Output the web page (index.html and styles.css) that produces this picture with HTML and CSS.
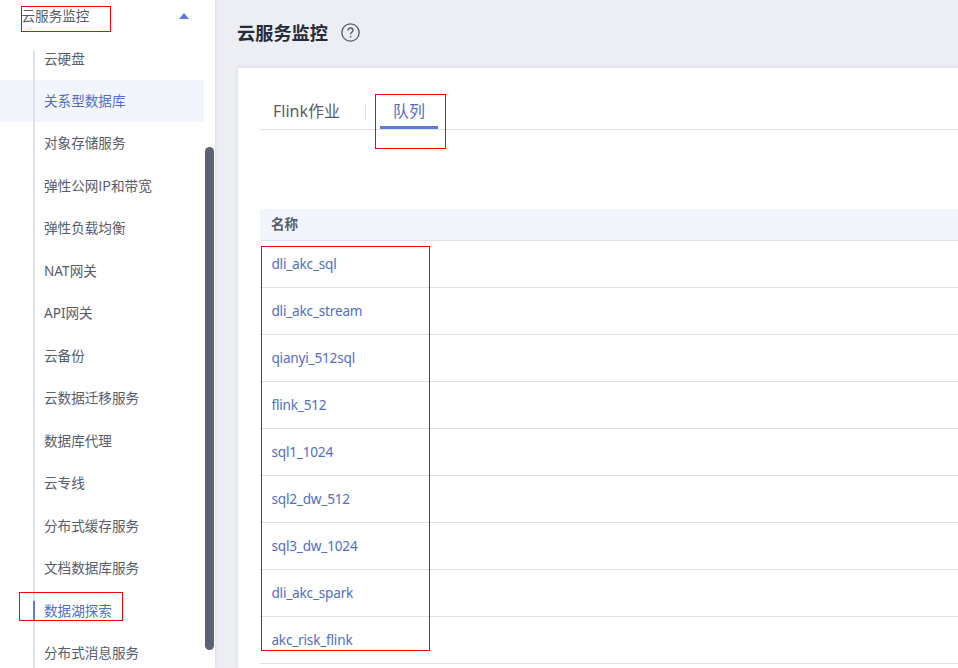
FILE: index.html
```html
<!DOCTYPE html>
<html lang="zh-CN">
<head>
<meta charset="utf-8">
<title>云服务监控</title>
<link rel="stylesheet" href="styles.css">
</head>
<body>
<aside class="sidebar">
  <div class="group"><span>云服务监控</span><svg class="caret" viewBox="0 0 10 6"><path d="M5 0L10 6H0Z"/></svg></div>
  <ul class="menu">
    <li>云硬盘</li>
    <li class="hover">关系型数据库</li>
    <li>对象存储服务</li>
    <li>弹性公网IP和带宽</li>
    <li>弹性负载均衡</li>
    <li><span class="latin">NAT</span>网关</li>
    <li><span class="latin">API</span>网关</li>
    <li>云备份</li>
    <li>云数据迁移服务</li>
    <li>数据库代理</li>
    <li>云专线</li>
    <li>分布式缓存服务</li>
    <li>文档数据库服务</li>
    <li class="current">数据湖探索</li>
    <li>分布式消息服务</li>
  </ul>
  <div class="scroll"></div>
</aside>
<main class="main">
  <header class="title"><h1>云服务监控</h1>
    <svg class="help" viewBox="0 0 18 18"><circle cx="9" cy="9" r="8.2"/><path d="M6.6 7.1C6.6 5.6 7.6 4.7 9 4.7s2.4.9 2.4 2.2c0 1.7-2.3 1.9-2.3 3.7"/><path d="M9.1 12.2v1.5"/></svg>
  </header>
  <section class="panel">
    <nav class="tabs"><a class="tab first">Flink作业</a><a class="tab active">队列</a></nav>
    <div class="table">
      <div class="head">名称</div>
      <div class="row">dli_akc_sql</div>
      <div class="row">dli_akc_stream</div>
      <div class="row">qianyi_512sql</div>
      <div class="row">flink_512</div>
      <div class="row">sql1_1024</div>
      <div class="row">sql2_dw_512</div>
      <div class="row">sql3_dw_1024</div>
      <div class="row">dli_akc_spark</div>
      <div class="row">akc_risk_flink</div>
    </div>
  </section>
</main>
<div class="mark mark-group"></div>
<div class="mark mark-current"></div>
<div class="mark mark-tab"></div>
<div class="mark mark-names"></div>
</body>
</html>
```
FILE: styles.css
```css
* { box-sizing: border-box; }
body {
  margin: 0;
  width: 958px;
  height: 668px;
  overflow: hidden;
  position: relative;
  display: flex;
  background: #edeef4;
  color: #575d6c;
  font: 13.6px/20px "Noto Sans", "Noto Sans CJK SC", sans-serif;
}
.sidebar {
  position: relative;
  width: 215px;
  height: 668px;
  flex: none;
  background: #fff;
  box-shadow: 0 0 5px rgba(60, 65, 90, .12);
  font-family: "Noto Sans CJK SC", sans-serif;
  font-weight: 400;
}
.group {
  height: 37.5px;
  padding: 5px 26.5px 0 21.5px;
  display: flex;
  justify-content: space-between;
}
.caret { width: 10px; height: 6px; margin-top: 8px; fill: #5e7ce0; }
.menu {
  list-style: none;
  margin: 0;
  padding: 0;
  width: 204px;
  position: relative;
}
.menu::before {
  content: "";
  position: absolute;
  left: 33px;
  top: 13.5px;
  width: 2px;
  height: 620px;
  background: #dfe1e6;
}
.menu li {
  height: 42.47px;
  line-height: 40px;
  padding-left: 44px;
  white-space: nowrap;
}
.latin { font-family: "Noto Sans", sans-serif; }
.menu .hover { background: #f2f5fc; color: #526ecc; }
.menu .current { color: #526ecc; position: relative; }
.menu .current::before {
  content: "";
  position: absolute;
  left: 33px;
  top: 11.5px;
  width: 2px;
  height: 19px;
  background: #5e7ce0;
}
.scroll {
  position: absolute;
  left: 205px;
  top: 147px;
  width: 9px;
  height: 503px;
  border-radius: 5px;
  background: #5c6173;
}
.main { flex: 1; min-width: 0; padding-left: 23px; display: flex; flex-direction: column; }
.title { height: 68px; flex: none; display: flex; align-items: flex-start; }
.title h1 {
  margin: 19px 0 0 -1px;
  font: 700 18.2px/26px "Noto Sans CJK SC", sans-serif;
  color: #252b3a;
}
.help { width: 19px; height: 19px; margin: 23px 0 0 13px; fill: none; stroke: #575d6c; stroke-width: 1.3; }
.panel {
  flex: 1;
  background: #fff;
  padding: 27px 0 0 22px;
  box-shadow: 0 0 4px rgba(60, 65, 90, .14);
}
.tabs {
  height: 35px;
  display: flex;
  border-bottom: 1px solid #dfe1e6;
  font: 400 16px/32px "Noto Sans", "Noto Sans CJK SC", sans-serif;
}
.tab.first {
  width: 106px;
  padding-left: 13px;
  background: linear-gradient(#dfe1e6, #dfe1e6) right 9px / 1px 16px no-repeat;
}
.tab.active {
  width: 58px;
  height: 34px;
  margin-left: 14px;
  text-align: center;
  color: #526ecc;
  border-bottom: 3px solid #5e7ce0;
}
.table { margin-top: 79px; }
.head {
  height: 32px;
  line-height: 29px;
  padding-left: 11px;
  background: #f2f5fc;
  border-bottom: 1px solid #dfe1e6;
  font-family: "Noto Sans CJK SC", sans-serif;
  font-weight: 700;
}
.row {
  height: 47px;
  line-height: 46px;
  padding-left: 11.4px;
  letter-spacing: -.19px;
  color: #526ecc;
  border-bottom: 1px solid #dfe1e6;
}
.mark { position: absolute; border: 1px solid #f00; }
.mark-group { left: 21px; top: 6px; width: 90px; height: 26px; }
.mark-current { left: 19px; top: 592px; width: 104px; height: 29px; }
.mark-tab { left: 375px; top: 94px; width: 71px; height: 55px; }
.mark-names { left: 261px; top: 246px; width: 169px; height: 405px; }
```
